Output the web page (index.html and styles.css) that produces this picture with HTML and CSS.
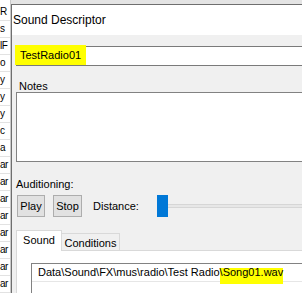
FILE: index.html
```html
<!DOCTYPE html>
<html lang="en">
<head>
    <meta charset="UTF-8">
    <title>Sound Descriptor</title>
    <link rel="stylesheet" href="styles.css">
</head>
<body>
    <div class="screen">
        <!-- window behind the dialog -->
        <div class="behind">
            <div class="behind-row">R</div>
            <div class="behind-row">s</div>
            <div class="behind-row">lF</div>
            <div class="behind-row">o</div>
            <div class="behind-row">y</div>
            <div class="behind-row">y</div>
            <div class="behind-row">y</div>
            <div class="behind-row">c</div>
            <div class="behind-row">a</div>
            <div class="behind-row">ar</div>
            <div class="behind-row">ar</div>
            <div class="behind-row">ar</div>
            <div class="behind-row">ar</div>
            <div class="behind-row">ar</div>
            <div class="behind-row">ar</div>
            <div class="behind-row">ar</div>
            <div class="behind-row">ar</div>
        </div>

        <div class="dialog">
            <div class="window">
                <div class="titlebar">Sound Descriptor</div>

                <div class="content">
                    <div class="name-field"><span class="mark-name">TestRadio01</span></div>

                    <div class="label notes-label">Notes</div>
                    <div class="notes"></div>

                    <div class="label audition-label">Auditioning:</div>
                    <div class="audition-row">
                        <button class="btn btn-play">Play</button>
                        <button class="btn btn-stop">Stop</button>
                        <span class="distance">Distance:</span>
                        <div class="slider">
                            <span class="thumb"></span>
                            <span class="track"></span>
                        </div>
                    </div>

                    <div class="tabs">
                        <div class="tab tab-active">Sound</div>
                        <div class="tab">Conditions</div>
                    </div>
                    <div class="panel">
                        <div class="file-list">
                            <div class="file-row">Data\Sound\FX\mus\radio\Test Radio<span class="mark-file">\Song01.wav</span></div>
                        </div>
                    </div>
                </div>
            </div>
        </div>
    </div>
</body>
</html>
```

FILE: styles.css
```css
body {
    margin: 0;
    background: #f0f0f0;
    font-family: 'Liberation Sans', Arial, sans-serif;
    font-size: 11px;
    color: #000;
    overflow: hidden;
}

.screen {
    display: flex;
    width: 302px;
    height: 293px;
    overflow: hidden;
}

/* Window behind */
.behind {
    flex: 0 0 10px;
    padding-top: 4px;
    background: #fff;
    border-right: 1px solid #c9c9c9;
    overflow: hidden;
}

.behind-row {
    height: 16px;
    line-height: 16px;
    border-bottom: 1px solid #e2e2e2;
    white-space: nowrap;
    font-size: 10px;
    letter-spacing: -0.5px;
}

/* Dialog */
.dialog {
    flex: 0 0 340px;
    border-top: 4px solid #e4e4e4;
    display: flex;
}

.window {
    flex: 1;
    display: flex;
    flex-direction: column;
    border-top: 1px solid #6f6f6f;
    border-left: 1px solid #6f6f6f;
}

.titlebar {
    height: 30px;
    line-height: 30px;
    padding-left: 1px;
    background: #fff;
    font-size: 12px;
}

.content {
    flex: 1;
    display: flex;
    flex-direction: column;
    background: #f0f0f0;
    padding: 11px 0 0 4px;
}

.name-field {
    box-sizing: border-box;
    height: 20px;
    display: flex;
    align-items: flex-start;
    padding-left: 3px;
    background: #fff;
    border: 1px solid #7a7a7a;
    border-right: none;
}

.mark-name {
    display: inline-block;
    height: 20px;
    line-height: 20px;
    margin: -2px -5px 0;
    padding: 0 5px;
    background: #ffff00;
}

.label {
    line-height: 12px;
    height: 12px;
    padding-left: 3px;
}

.notes-label {
    margin-top: 14px;
}

.notes {
    box-sizing: border-box;
    height: 70px;
    background: #fff;
    border: 1px solid #828282;
    border-right: none;
}

.audition-label {
    margin-top: 16px;
    padding-left: 0;
}

.audition-row {
    display: flex;
    align-items: center;
    height: 22px;
    margin-top: 5px;
    padding-left: 1px;
}

.btn {
    box-sizing: border-box;
    height: 22px;
    padding: 0;
    background: #e1e1e1;
    border: 1px solid #adadad;
    font-family: inherit;
    font-size: 11px;
    color: #000;
}

.btn-play {
    width: 28px;
}

.btn-stop {
    width: 29px;
    margin-left: 8px;
}

.distance {
    margin-left: 11px;
}

.slider {
    flex: 1;
    display: flex;
    align-items: center;
    margin-left: 18px;
}

.thumb {
    width: 11px;
    height: 22px;
    background: #0078d7;
}

.track {
    flex: 1;
    box-sizing: border-box;
    height: 4px;
    background: #e7e7e7;
    border: 1px solid #d6d6d6;
    border-left: none;
}

/* Tabs */
.tabs {
    display: flex;
    align-items: flex-end;
    height: 20px;
    margin-top: 13px;
}

.tab {
    box-sizing: border-box;
    width: 58px;
    height: 17px;
    line-height: 16px;
    padding-top: 1px;
    text-align: center;
    background: #f0f0f0;
    border: 1px solid #d9d9d9;
    border-left: none;
    border-bottom: none;
}

.tab-active {
    position: relative;
    z-index: 1;
    width: 46px;
    height: 21px;
    line-height: 19px;
    padding-top: 0;
    margin-bottom: -1px;
    background: #fff;
    border-left: 1px solid #d9d9d9;
}

.panel {
    flex: 1;
    background: #fff;
    border-top: 1px solid #d9d9d9;
    border-left: 1px solid #d9d9d9;
    padding: 12px 0 0 14px;
}

.file-list {
    height: 100%;
    border-top: 1px solid #828282;
    border-left: 1px solid #828282;
}

.file-row {
    height: 17px;
    line-height: 17px;
    padding-left: 6px;
    white-space: nowrap;
    border-bottom: 1px solid #e6e6e6;
}

.mark-file {
    display: inline-block;
    line-height: 17px;
    padding-bottom: 3px;
    background: linear-gradient(to bottom, transparent 4px, #ffff00 4px);
}
```
